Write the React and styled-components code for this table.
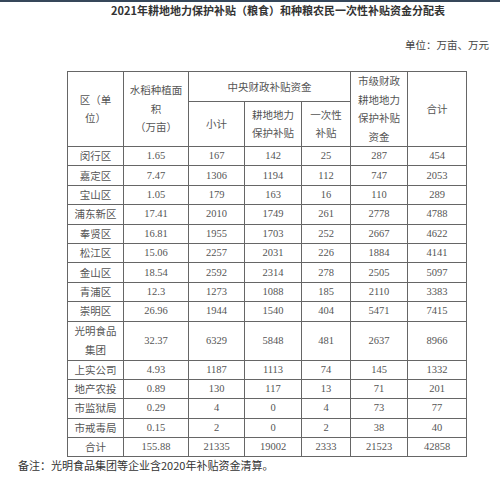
import React from 'react';
import styled, { createGlobalStyle } from 'styled-components';

const GlobalStyle = createGlobalStyle`
  html, body {
    margin: 0;
    padding: 0;
    background: #fff;
  }
`;

const Page = styled.div`
  width: 500px;
  height: 483px;
  box-sizing: border-box;
  border-top: 2px solid #36475a;
  background: #fff;
  font-family: "Noto Sans CJK SC", "Noto Sans", sans-serif;
  color: #333;
  overflow: hidden;
`;

const Title = styled.h1`
  margin: 0;
  padding-left: 56px;
  font-size: 11px;
  line-height: 16px;
  font-weight: 700;
  text-align: center;
  color: #333;
`;

const Unit = styled.div`
  margin-top: 19px;
  padding-right: 11px;
  font-size: 10.5px;
  line-height: 16px;
  text-align: right;
  color: #444;
`;

const TableWrap = styled.div`
  margin-top: 18px;
  padding-left: 67px;
`;

const Table = styled.table`
  width: 400px;
  border-collapse: collapse;
  table-layout: fixed;
  font-family: "Liberation Serif", "Noto Sans CJK SC", serif;
  font-size: 10.5px;
  color: #555;
`;

const Row = styled.tr`
  height: ${p => p.$h || 19.4}px;
`;

const Cell = styled.td`
  border: 1px solid #666;
  padding: 0;
  text-align: center;
  vertical-align: middle;
  line-height: ${p => (p.$tall ? '18.5px' : '16px')};
  white-space: nowrap;
  font-family: ${p => (p.$cjk ? '"Noto Sans CJK SC", sans-serif' : 'inherit')};
`;

const Note = styled.div`
  padding-left: 18px;
  font-size: 11px;
  line-height: 16px;
  color: #333;
`;

const widths = [56, 65, 56, 57, 49, 57, 59];

const rows = [
  ['闵行区', '1.65', '167', '142', '25', '287', '454'],
  ['嘉定区', '7.47', '1306', '1194', '112', '747', '2053'],
  ['宝山区', '1.05', '179', '163', '16', '110', '289'],
  ['浦东新区', '17.41', '2010', '1749', '261', '2778', '4788'],
  ['奉贤区', '16.81', '1955', '1703', '252', '2667', '4622'],
  ['松江区', '15.06', '2257', '2031', '226', '1884', '4141'],
  ['金山区', '18.54', '2592', '2314', '278', '2505', '5097'],
  ['青浦区', '12.3', '1273', '1088', '185', '2110', '3383'],
  ['崇明区', '26.96', '1944', '1540', '404', '5471', '7415'],
  [['光明食品', '集团'], '32.37', '6329', '5848', '481', '2637', '8966'],
  ['上实公司', '4.93', '1187', '1113', '74', '145', '1332'],
  ['地产农投', '0.89', '130', '117', '13', '71', '201'],
  ['市监狱局', '0.29', '4', '0', '4', '73', '77'],
  ['市戒毒局', '0.15', '2', '0', '2', '38', '40'],
  ['合计', '155.88', '21335', '19002', '2333', '21523', '42858'],
];

const Lines = ({ items }) =>
  items.map((t, i) => (
    <React.Fragment key={i}>
      {i > 0 && <br />}
      {t}
    </React.Fragment>
  ));

export default function App() {
  return (
    <Page>
      <GlobalStyle />
      <Title>2021年耕地地力保护补贴（粮食）和种粮农民一次性补贴资金分配表</Title>
      <Unit>单位：万亩、万元</Unit>
      <TableWrap>
        <Table>
          <colgroup>
            {widths.map((w, i) => (
              <col key={i} style={{ width: w }} />
            ))}
          </colgroup>
          <thead>
            <Row $h={30}>
              <Cell $cjk $tall rowSpan={2}>
                <Lines items={['区（单', '位）']} />
              </Cell>
              <Cell $cjk $tall rowSpan={2}>
                <Lines items={['水稻种植面', '积', '（万亩）']} />
              </Cell>
              <Cell $cjk colSpan={3}>中央财政补贴资金</Cell>
              <Cell $cjk $tall rowSpan={2}>
                <Lines items={['市级财政', '耕地地力', '保护补贴', '资金']} />
              </Cell>
              <Cell $cjk rowSpan={2}>合计</Cell>
            </Row>
            <Row $h={45}>
              <Cell $cjk>小计</Cell>
              <Cell $cjk $tall>
                <Lines items={['耕地地力', '保护补贴']} />
              </Cell>
              <Cell $cjk $tall>
                <Lines items={['一次性', '补贴']} />
              </Cell>
            </Row>
          </thead>
          <tbody>
            {rows.map((r, i) => {
              const multi = Array.isArray(r[0]);
              return (
                <Row key={i} $h={multi ? 39 : 19.4}>
                  <Cell $cjk $tall={multi}>{multi ? <Lines items={r[0]} /> : r[0]}</Cell>
                  {r.slice(1).map((v, j) => (
                    <Cell key={j}>{v}</Cell>
                  ))}
                </Row>
              );
            })}
          </tbody>
        </Table>
      </TableWrap>
      <Note>备注：光明食品集团等企业含2020年补贴资金清算。</Note>
    </Page>
  );
}
